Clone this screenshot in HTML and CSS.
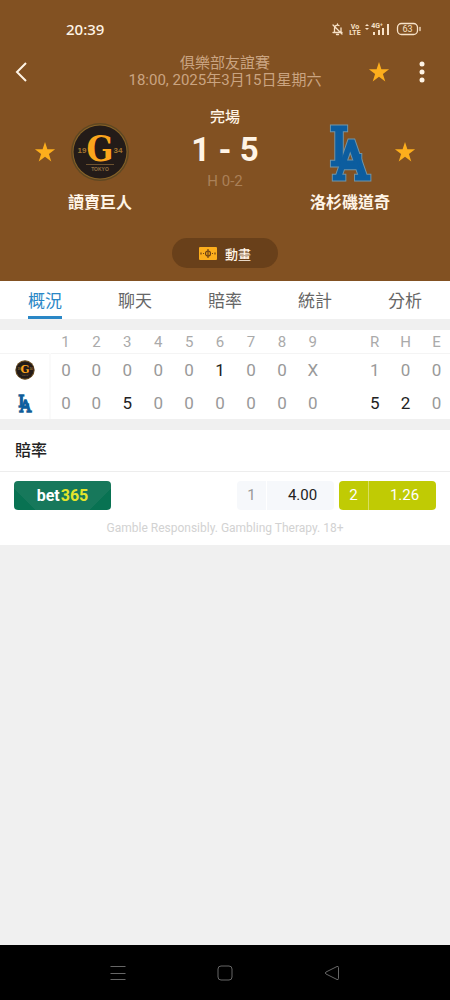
FILE: index.html
```html
<!DOCTYPE html>
<html lang="zh-Hant">
<head>
<meta charset="utf-8">
<meta name="viewport" content="width=device-width, initial-scale=1">
<title>讀賣巨人 1 - 5 洛杉磯道奇</title>
<link rel="stylesheet" href="styles.css">
</head>
<body>
<svg class="defs" width="0" height="0" aria-hidden="true">
  <symbol id="star" viewBox="0 0 22 22"><path d="M11 1l2.4 7.3h7.7l-6.2 4.6 2.4 7.6-6.3-4.7-6.3 4.7 2.4-7.6L.9 8.300h7.700z"/></symbol>
  <symbol id="giants" viewBox="0 0 60 60">
    <circle cx="30" cy="30" r="29" fill="#5f4722"/>
    <circle cx="30" cy="30" r="27.500" fill="#8a6428"/>
    <circle cx="30" cy="30" r="26.500" fill="#231b18"/>
    <text class="giants-g" x="30" y="39" text-anchor="middle">G</text>
    <text class="giants-year" x="12" y="31" text-anchor="middle">19</text>
    <text class="giants-year" x="48" y="31" text-anchor="middle">34</text>
    <path d="M16 42.500h28" stroke="#6d5230" stroke-width="1"/>
    <text class="giants-city" x="30" y="49" text-anchor="middle">TOKYO</text>
  </symbol>
  <symbol id="dodgers" viewBox="0 0 46 62">
    <g class="dodgers-edge" aria-hidden="true">
      <text x="2" y="44">L</text>
      <text x="7" y="59">A</text>
    </g>
    <g class="dodgers-letters">
      <text x="2" y="44">L</text>
      <text x="7" y="59">A</text>
    </g>
  </symbol>
</svg>

<header class="hero">
  <div class="status">
    <span class="clock">20:39</span>
    <svg class="status-icons" width="92" height="18" viewBox="0 0 92 18" role="img" aria-label="手機狀態">
      <g fill="none" stroke="#f8e2c8" stroke-width="1.300" stroke-linecap="round">
        <path d="M3 12.500h9M4.500 12V8.500a3 3 0 0 1 4.500-3M11 8v4M7.500 4V5M6.500 14.500h2M3 5l9 9"/>
        <rect x="67.500" y="3.500" width="20" height="11" rx="4"/>
        <path d="M90 7.500v3"/>
      </g>
      <g fill="#f8e2c8">
        <path d="M35 6l2-2 2 2zM35 8l2 2 2-2zM43 12h2v3h-2zM48 10h2v5h-2zM52 8h2v7h-2zM57 4h2v11h-2z"/>
        <text class="tiny" x="25" y="8.500" text-anchor="middle">Vo</text>
        <text class="tiny" x="25" y="15" text-anchor="middle">LTE</text>
        <text class="tiny" x="47" y="8" text-anchor="middle">4G⁺</text>
        <text class="battery" x="77.500" y="12" text-anchor="middle">63</text>
      </g>
    </svg>
  </div>

  <div class="topbar">
    <button class="icon-btn back" aria-label="返回">
      <svg width="12" height="20" viewBox="0 0 12 20"><path d="M11 1L2 10l9 9" fill="none" stroke="#fff4e6" stroke-width="2"/></svg>
    </button>
    <div class="event">
      <div>俱樂部友誼賽</div>
      <div>18:00, 2025年3月15日星期六</div>
    </div>
    <button class="icon-btn fav" aria-label="收藏比賽"><svg class="star"><use href="#star"/></svg></button>
    <button class="icon-btn more" aria-label="更多">
      <svg width="6" height="22" viewBox="0 0 6 22" fill="#fff4e6"><circle cx="3" cy="3" r="2.500"/><circle cx="3" cy="11" r="2.500"/><circle cx="3" cy="19" r="2.500"/></svg>
    </button>
  </div>

  <div class="match">
    <button class="icon-btn team-fav" aria-label="收藏讀賣巨人"><svg class="star"><use href="#star"/></svg></button>
    <div class="team">
      <svg class="team-logo" width="60" height="60" role="img" aria-label="讀賣巨人標誌"><use href="#giants"/></svg>
      <div class="team-name">讀賣巨人</div>
    </div>
    <div class="result">
      <div class="state">完場</div>
      <div class="score">1 - 5</div>
      <div class="hits">H 0-2</div>
    </div>
    <div class="team">
      <svg class="team-logo" width="46" height="60" role="img" aria-label="洛杉磯道奇標誌"><use href="#dodgers"/></svg>
      <div class="team-name">洛杉磯道奇</div>
    </div>
    <button class="icon-btn team-fav" aria-label="收藏洛杉磯道奇"><svg class="star"><use href="#star"/></svg></button>
  </div>

  <button class="animation">
    <svg width="18" height="13" viewBox="0 0 18 13"><rect width="18" height="13" rx="1" fill="#fdae1c"/><g fill="none" stroke="#704214" stroke-width="1.200"><circle cx="9" cy="6.500" r="2.500"/><path d="M9 2v9M2 5.500v2M16 5.500v2M4 6.500h1M13 6.500h1"/></g></svg>
    動畫
  </button>
</header>

<nav class="tabs">
  <a class="tab active" href="#overview" aria-current="page">概況</a>
  <a class="tab" href="#chat">聊天</a>
  <a class="tab" href="#odds">賠率</a>
  <a class="tab" href="#stats">統計</a>
  <a class="tab" href="#analysis">分析</a>
</nav>

<main>
  <section class="panel innings" id="overview">
    <table>
      <thead>
        <tr><th class="club" aria-label="球隊"></th><th>1</th><th>2</th><th>3</th><th>4</th><th>5</th><th>6</th><th>7</th><th>8</th><th>9</th><th></th><th>R</th><th>H</th><th>E</th></tr>
      </thead>
      <tbody>
        <tr><th class="club"><svg width="20" height="20" role="img" aria-label="讀賣巨人"><use href="#giants"/></svg></th><td>0</td><td>0</td><td>0</td><td>0</td><td>0</td><td class="hot">1</td><td>0</td><td>0</td><td>X</td><td></td><td>1</td><td>0</td><td>0</td></tr>
        <tr><th class="club"><svg width="20" height="20" role="img" aria-label="洛杉磯道奇"><use href="#dodgers"/></svg></th><td>0</td><td>0</td><td class="hot">5</td><td>0</td><td>0</td><td>0</td><td>0</td><td>0</td><td>0</td><td></td><td class="hot">5</td><td class="hot">2</td><td>0</td></tr>
      </tbody>
    </table>
  </section>

  <section class="panel" id="odds">
    <h2 class="odds-title">賠率</h2>
    <div class="odds-row">
      <a class="bookmaker" href="#bet365"><span>bet</span><span class="number">365</span></a>
      <button class="odd"><span class="pick">1</span><span class="price">4.00</span></button>
      <button class="odd best"><span class="pick">2</span><span class="price">1.26</span></button>
    </div>
    <p class="notice">Gamble Responsibly. Gambling Therapy. 18+</p>
  </section>
</main>

<footer class="system-nav">
  <button class="icon-btn" aria-label="最近"><svg width="18" height="18" viewBox="0 0 18 18"><path d="M1.500 2.500h15M1.500 9.500h15M1.500 15.500h15"/></svg></button>
  <button class="icon-btn" aria-label="主頁"><svg width="18" height="18" viewBox="0 0 18 18"><rect x="2" y="2" width="14" height="14" rx="3"/></svg></button>
  <button class="icon-btn" aria-label="上一頁"><svg width="18" height="18" viewBox="0 0 18 18"><path d="M14 2.500L3 8q-1.500 1 0 2l11 5.500q1.500.5 1.500-1V3.500q0-1.500-1.500-1z"/></svg></button>
</footer>
</body>
</html>
```
FILE: styles.css
```css
* { box-sizing: border-box; }

body {
  margin: 0;
  min-height: 100vh;
  display: flex;
  flex-direction: column;
  background: #f0f0f0;
  color: #222;
  font-family: Roboto, "Noto Sans CJK TC", sans-serif;
  font-size: 16px;
}

button {
  border: 0;
  padding: 0;
  font: inherit;
  color: inherit;
}

a { color: inherit; text-decoration: none; }
.defs { display: none; }

.icon-btn {
  display: flex;
  align-items: center;
  justify-content: center;
  background: none;
}

.star { width: 22px; height: 22px; fill: #fdae1c; }

/* header */
.hero {
  display: flex;
  flex-direction: column;
  background: #825122;
  color: #fff4e6;
  padding-bottom: 13px;
}

.status {
  display: flex;
  align-items: center;
  justify-content: space-between;
  height: 40px;
  margin-top: 9px;
  padding: 0 28px 0 66px;
}

.clock { font-family: "Noto Sans", sans-serif; font-size: 15px; font-weight: 500; }
.tiny { font: bold 7px Roboto, sans-serif; }
.battery { font: 9px Roboto, sans-serif; }

.topbar {
  display: grid;
  grid-template-columns: 82px 1fr 22px 60px;
  align-items: center;
  height: 46px;
}

.back { justify-self: start; padding-left: 15px; }
.more { justify-self: end; padding-right: 25px; }
.fav { justify-self: center; }

.event {
  color: #caa481;
  font-size: 15px;
  line-height: 17px;
  text-align: center;
  white-space: nowrap;
}

.match {
  display: grid;
  grid-template-columns: 22px 88px 1fr 88px 22px;
  padding: 12px 34px 0;
}

.team-fav { height: 22px; margin-top: 34px; }

.team {
  display: flex;
  flex-direction: column;
  align-items: center;
  padding-top: 15px;
}

.team-name {
  margin-top: 8px;
  font-size: 16px;
  font-weight: 700;
  line-height: 26px;
  white-space: nowrap;
}

.result { text-align: center; }
.state { font-size: 15px; line-height: 21px; font-weight: 500; }
.score { font-size: 33px; line-height: 44px; font-weight: 700; }
.hits { font-size: 15px; line-height: 19px; color: #aa8058; }

.giants-g { font: bold 35px "DejaVu Serif Condensed", "DejaVu Serif", serif; fill: #fba51c; }
.giants-year { font: bold 8px "Liberation Sans", sans-serif; fill: #a3752f; }
.giants-city { font: bold 5px "Liberation Sans", sans-serif; fill: #927043; }

.dodgers-edge,
.dodgers-letters {
  font: 54px "DejaVu Serif Condensed", "DejaVu Serif", serif;
  fill: #0c5d9f;
  stroke: #0c5d9f;
  stroke-width: 3px;
}

.dodgers-edge { stroke: #7294a5; stroke-width: 5px; }

.animation {
  display: flex;
  align-items: center;
  justify-content: center;
  align-self: center;
  gap: 8px;
  width: 106px;
  height: 30px;
  margin-top: 22px;
  border-radius: 15px;
  background: #69401a;
  font-size: 13px;
  font-weight: 500;
}

/* tabs */
.tabs {
  display: grid;
  grid-template-columns: repeat(5, 1fr);
  justify-items: center;
  background: #fff;
}

.tab {
  height: 38px;
  border-bottom: 3px solid transparent;
  color: #666;
  font-size: 17px;
  line-height: 41px;
}

.tab.active { color: #2a87c6; border-color: #2a87c6; }

/* panels */
main { flex: 1; }
.panel { margin-top: 11px; background: #fff; overflow: hidden; }

.innings table {
  width: 100%;
  min-width: 452px;
  table-layout: fixed;
  border-collapse: collapse;
  text-align: center;
}

.innings th, .innings td { padding: 0; font-weight: 400; }
.innings th { height: 23px; color: #aaa; font-size: 15px; }
.innings thead th { padding-top: 2px; border-bottom: 1px solid #f4f4f4; }
.innings .club { width: 50px; }
.innings tbody .club { border-right: 2px solid #fafafa; }
.innings svg { display: block; margin: 0 auto; }
.innings td { height: 33px; color: #999; font-size: 17px; }
.innings td.hot { color: #222; }

.odds-title {
  margin: 0;
  padding: 1px 15px 0;
  border-bottom: 1px solid #ededed;
  font-size: 16px;
  font-weight: 500;
  line-height: 40px;
}

.odds-row {
  display: flex;
  gap: 5px;
  padding: 9px 14px 0;
}

.bookmaker {
  display: flex;
  align-items: center;
  justify-content: center;
  width: 97px;
  height: 29px;
  margin-right: auto;
  border-radius: 4px;
  background:
    linear-gradient(45deg, #087252 15px, transparent 15px),
    linear-gradient(-45deg, #087252 15px, transparent 15px),
    #17785b;
  color: #fff;
  font-size: 16px;
  font-weight: 700;
}

.bookmaker .number { padding-left: 1px; color: #e5e52c; }

.odd {
  display: flex;
  width: 97px;
  height: 29px;
  border-radius: 4px;
  background: #f6f8fb;
  font-size: 15px;
  line-height: 29px;
  overflow: hidden;
}

.odd .pick { width: 30px; border-right: 1px solid #fff; color: #999; }
.odd .price { flex: 1; padding-left: 4px; }
.odd.best { background: #c0cb04; color: #fff; }
.odd.best .pick { border-color: #d8df62; color: #fff; }

.notice {
  margin: 0;
  padding: 8px 0 7px;
  color: #d2d2d2;
  font-size: 12px;
  line-height: 20px;
  text-align: center;
}

.system-nav {
  display: grid;
  grid-template-columns: repeat(3, 1fr);
  height: 55px;
  padding: 0 64px;
  background: #000;
}

.system-nav svg { fill: none; stroke: #666; stroke-width: 1px; }
```
